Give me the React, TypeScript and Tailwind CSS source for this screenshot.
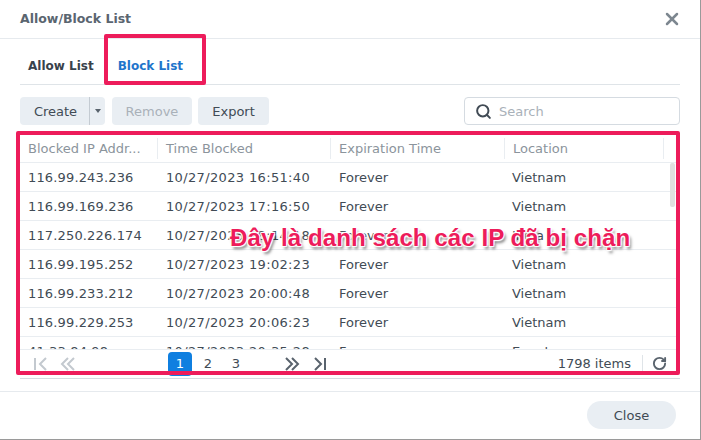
import { RotateCw, Search, X } from 'lucide-react';

const rows = [
  { ip: '116.99.243.236', time: '10/27/2023 16:51:40', location: 'Vietnam' },
  { ip: '116.99.169.236', time: '10/27/2023 17:16:50', location: 'Vietnam' },
  { ip: '117.250.226.174', time: '10/27/2023 18:14:18', location: 'India' },
  { ip: '116.99.195.252', time: '10/27/2023 19:02:23', location: 'Vietnam' },
  { ip: '116.99.233.212', time: '10/27/2023 20:00:48', location: 'Vietnam' },
  { ip: '116.99.229.253', time: '10/27/2023 20:06:23', location: 'Vietnam' },
  { ip: '41.33.84.98', time: '10/27/2023 20:35:28', location: 'Egypt' },
];

function Row({ ip, time, location }: { ip: string; time: string; location: string }) {
  return (
    <div className="flex h-[29px] shrink-0 items-center border-b border-[#e9edf1] pt-[2px] text-[13px] text-[#414b55]">
      <div className="w-[138px] pl-2 tracking-[0.15px]">{ip}</div>
      <div className="w-[173px] pl-2 tracking-[0.35px]">{time}</div>
      <div className="w-[173px] pl-2">Forever</div>
      <div className="pl-2">{location}</div>
    </div>
  );
}

function HeaderCell({ label, width }: { label: string; width: string }) {
  return (
    <div className={`flex h-[21px] items-center truncate border-r border-[#e9edf1] pl-2 ${width}`}>
      {label}
    </div>
  );
}

export default function App() {
  return (
    <div className="relative h-[440px] w-[701px] overflow-hidden border-r border-b border-[#9a9a9a] bg-white font-['DejaVu_Sans',sans-serif]">
      <div className="flex h-[39px] items-center justify-between border-b border-[#e6eaee] pr-[18px] pl-5">
        <span className="text-[12.5px] font-bold text-[#5a6570]">Allow/Block List</span>
        <X size={20} strokeWidth={3} className="text-[#7d8790]" />
      </div>

      <div className="px-5">
        <div className="flex h-[46px] items-center gap-[24px] border-b border-[#dfe4e8] pt-[8px] pl-2 text-[12px] font-bold">
          <span className="text-[#38424c]">Allow List</span>
          <span className="text-[#1f75cb]">Block List</span>
        </div>

        <div className="mt-[12px] flex h-[28px] items-stretch text-[13px]">
          <div className="flex rounded-[4px] bg-[#e9eef3] text-[#414b55]">
            <div className="flex w-[70px] items-center justify-center border-r border-[#c4cbd2] pt-[2px] pl-[2px]">Create</div>
            <div className="flex w-[15px] items-center justify-center">
              <div className="h-0 w-0 border-x-[3.5px] border-t-[4px] border-x-transparent border-t-[#59636d]" />
            </div>
          </div>
          <div className="ml-[7px] flex w-[80px] items-center justify-center rounded-[4px] bg-[#e9eef3] pt-[2px] text-[#a9b1b9]">Remove</div>
          <div className="ml-[6px] flex w-[71px] items-center justify-center rounded-[4px] bg-[#e9eef3] pt-[2px] text-[#414b55]">Export</div>
          <div className="ml-auto flex w-[216px] items-center rounded-[4px] border border-[#d5dbe1] pl-[10px] text-[#a9b1b9]">
            <Search size={17} strokeWidth={2.8} className="text-[#414b55]" />
            <span className="ml-[7px] pt-[2px]">Search</span>
          </div>
        </div>

        <div className="mt-[12px] flex h-[242px] flex-col border-b border-[#d5dbe1]">
          <div className="flex h-[26px] shrink-0 items-center border-b border-[#e9edf1] pb-[2px] text-[13px] text-[#8b949c]">
            <HeaderCell label="Blocked IP Addr..." width="w-[138px]" />
            <HeaderCell label="Time Blocked" width="w-[173px]" />
            <HeaderCell label="Expiration Time" width="w-[174px]" />
            <HeaderCell label="Location" width="w-[159px]" />
          </div>

          <div className="relative flex h-[186px] flex-col overflow-hidden">
            {rows.map((r) => (
              <Row key={r.ip} ip={r.ip} time={r.time} location={r.location} />
            ))}
            <div className="absolute top-0 right-[5px] h-[44px] w-[5px] rounded-[2px] bg-[#e0e0e0]" />
          </div>

          <div className="flex h-[29px] shrink-0 items-center border-t border-[#e9edf1] pb-px text-[13px] text-[#414b55]">
            <svg width="16" height="16" viewBox="0 0 16 16" fill="none" stroke="#c3c9cf" strokeWidth="2" className="ml-[13px]">
              <path d="M2 2v12M13 2L7 8l6 6" />
            </svg>
            <svg width="16" height="16" viewBox="0 0 16 16" fill="none" stroke="#c3c9cf" strokeWidth="2" className="ml-[11px]">
              <path d="M8 2L2 8l6 6M14 2L8 8l6 6" />
            </svg>
            <div className="ml-[92px] flex h-[24px] w-[24px] items-center justify-center rounded-[4px] bg-[#0f7fe0] text-white">1</div>
            <div className="ml-[2px] flex w-[28px] justify-center">2</div>
            <div className="flex w-[28px] justify-center">3</div>
            <svg width="16" height="16" viewBox="0 0 16 16" fill="none" stroke="#59636d" strokeWidth="2" className="ml-[34px]">
              <path d="M2 2l6 6-6 6M8 2l6 6-6 6" />
            </svg>
            <svg width="16" height="16" viewBox="0 0 16 16" fill="none" stroke="#59636d" strokeWidth="2" className="ml-[12px]">
              <path d="M3 2l6 6-6 6M13 2v12" />
            </svg>
            <span className="ml-auto">1798 items</span>
            <div className="ml-[11px] h-[18px] w-px bg-[#dfe4e8]" />
            <RotateCw size={15} strokeWidth={3} className="mr-[13px] ml-[9px] text-[#59636d]" />
          </div>
        </div>
      </div>

      <div className="mt-[12px] flex h-[49px] items-start justify-end border-t border-[#e6eaee] pt-[9px] pr-[24px]">
        <div className="flex h-[28px] w-[89px] items-center justify-center rounded-full bg-[#e9eef3] pt-[2px] text-[13px] text-[#414b55]">Close</div>
      </div>

      <div className="absolute top-[34px] left-[104px] h-[51px] w-[102px] rounded-[2px] border-[4px] border-[#ed1c5b]" />
      <div className="absolute top-[131px] left-[16px] h-[244px] w-[664px] rounded-[2px] border-[4px] border-[#ed1c5b]" />
      <div className="absolute top-[224px] left-[230px] font-['Liberation_Sans',sans-serif] text-[24.2px] leading-[28px] font-bold whitespace-nowrap text-[#ed1c5b] [text-shadow:1px_1px_1px_#fff,-1px_-1px_1px_#fff,1px_-1px_1px_#fff,-1px_1px_1px_#fff,2px_3px_3px_rgba(0,0,0,0.5)]">
        Đây là danh sách các IP đã bị chặn
      </div>
    </div>
  );
}
